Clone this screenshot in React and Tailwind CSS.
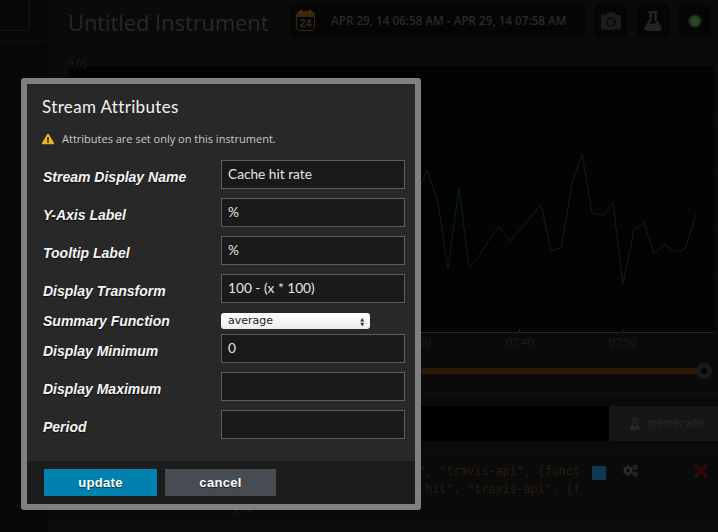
import React from "react";
import { FaCamera, FaFlask, FaExclamationTriangle, FaCogs, FaTimes } from "react-icons/fa";

const points =
  "421,185 427,170 438,203 448,269 459,188 469,267 479,256 489,240 499,227 510,241 520,230 530,218 541,204 551,251 561,248 572,183 582,154 592,213 603,215 613,203 623,284 634,230 644,223 654,254 665,244 675,252 685,249 696,214";

const fields = [
  { label: "Stream Display Name", value: "Cache hit rate" },
  { label: "Y-Axis Label", value: "%" },
  { label: "Tooltip Label", value: "%" },
  { label: "Display Transform", value: "100 - (x * 100)" },
  { label: "Summary Function", select: true },
  { label: "Display Minimum", value: "0" },
  { label: "Display Maximum", value: "" },
  { label: "Period", value: "" },
];

// Dimmed page that sits behind the modal
const Background = () => (
  <div className="flex h-full w-full bg-[#0a0a0a]">
    {/* Sidebar */}
    <div className="w-[48px] shrink-0 border-r border-[#050505] bg-[#080808]">
      <div className="h-[31px] w-[30px] border-r border-b border-[#131313]" />
      <div className="mt-[9px] border-t border-[#0e0e0e]" />
    </div>

    <div className="flex min-w-0 flex-1 flex-col">
      {/* Header */}
      <div className="flex h-[47px] shrink-0 items-start border-b border-[#0e0e0e] pt-[5px]">
        <div className="ml-[20px] w-[222px] text-[21.8px] leading-[36px] text-[#282828] font-['Open_Sans',sans-serif]">
          Untitled Instrument
        </div>
        <div className="flex h-[32px] w-[295px] items-center rounded-sm bg-[#050505]">
          <div className="relative ml-[6px] h-[20px] w-[19px] rounded-sm border border-[#3a2608]">
            <div className="h-[5px] bg-[#3a2608]" />
            <div className="absolute left-[3px] top-[-2px] h-[3px] w-[2px] bg-[#4a3210]" />
            <div className="absolute right-[3px] top-[-2px] h-[3px] w-[2px] bg-[#4a3210]" />
            <span className="absolute inset-x-0 top-[5px] text-center text-[11px] leading-[13px] font-bold text-[#2e2c28] font-['Liberation_Sans',sans-serif]">
              24
            </span>
          </div>
          <span className="ml-[16px] text-[11.7px] font-semibold text-[#2a2a2a] font-['Open_Sans',sans-serif]">
            APR 29, 14 06:58 AM - APR 29, 14 07:58 AM
          </span>
        </div>
        <div className="ml-[10px] flex h-[32px] w-[32px] items-center justify-center rounded-sm bg-[#050505] text-[#1c1c1c]">
          <FaCamera size={20} />
        </div>
        <div className="ml-[10px] flex h-[32px] w-[32px] items-center justify-center rounded-sm bg-[#050505] text-[#232323]">
          <FaFlask size={20} />
        </div>
        <div className="ml-[10px] flex h-[32px] w-[32px] items-center justify-center rounded-sm bg-[#050505]">
          <div className="h-[12px] w-[12px] rounded-full bg-[#2a4520] blur-[1px]" />
        </div>
      </div>

      {/* Chart */}
      <div className="ml-[20px] mr-[4px] mt-[19px] h-[266px] shrink-0 bg-[#030303]">
        <svg width="646" height="266" viewBox="68 66 646 266" className="block">
          {[120, 173, 226, 279].map((y) => (
            <line key={y} x1="68" x2="714" y1={y} y2={y} stroke="#080808" />
          ))}
          <polyline points={points} fill="none" stroke="#0c1f27" strokeWidth="1" />
        </svg>
      </div>
      <div className="relative mr-[4px] ml-[20px] h-[30px] shrink-0 border-t border-[#262626]">
        {[
          { label: "07:30", left: 335 },
          { label: "07:40", left: 438 },
          { label: "07:50", left: 541 },
        ].map((t) => (
          <span key={t.label} className="absolute top-px text-[11px] text-[#1c1c1c] font-['Open_Sans',sans-serif]" style={{ left: t.left }}>
            {t.label}
          </span>
        ))}
        <div className="absolute left-[451px] top-[-4px] h-[4px] w-px bg-[#262626]" />
        <div className="absolute left-[554px] top-[-4px] h-[4px] w-px bg-[#262626]" />
      </div>

      {/* Slider */}
      <div className="relative mr-[14px] ml-[20px] mt-[6px] h-[6px] shrink-0 bg-[#2a1a05]">
        <div className="absolute right-[-8px] top-[-5px] flex h-[16px] w-[16px] items-center justify-center rounded-full bg-[#1a1a1a]">
          <div className="h-[6px] w-[6px] rounded-full bg-[#050505]" />
        </div>
      </div>

      <div className="mt-[19px] shrink-0 border-t border-dotted border-[#161616]" />

      {/* Query row */}
      <div className="mt-[12px] flex h-[35px] shrink-0">
        <div className="flex-1 bg-black" />
        <div className="flex w-[109px] items-center bg-[#161616] pl-[20px] text-[#262626]">
          <FaFlask size={12} />
          <span className="ml-[7px] text-[13.6px] font-bold text-[#222222] font-['Liberation_Sans',sans-serif]">generate</span>
        </div>
      </div>

      <div className="mt-[10px] shrink-0 border-t border-[#101010]" />

      {/* Streams */}
      <div className="relative min-h-0 flex-1 overflow-hidden">
        <div className="pt-[10px] text-[11.7px] leading-[18px] whitespace-pre text-[#2a1c0c] font-['DejaVu_Sans_Mono',monospace]">
          <div className="ml-[370px]">{'", "travis-api", {funct'}</div>
          <div className="ml-[370px]">{'-hit", "travis-api", {f'}</div>
          <div className="ml-[184px]">{"});"}</div>
        </div>
        <div className="absolute left-[544px] top-[14px] h-[14px] w-[14px] bg-[#0d3a52]" />
        <div className="absolute left-[575px] top-[11px] text-[#2a2a2a]">
          <FaCogs size={15} />
        </div>
        <div className="absolute left-[643px] top-[9px] text-[#320909]">
          <FaTimes size={20} />
        </div>
        <div className="absolute inset-x-0 bottom-0 h-[9px] bg-[#0c0c0c]" />
      </div>
    </div>
  </div>
);

const Modal = () => (
  <div className="absolute left-[21px] top-[78px] w-[400px] rounded-[3px] border-[6px] border-[#808080] bg-[#282828]">
    <div className="px-[15px] pt-[12px]">
      <h2 className="text-[17px] leading-[22px] tracking-[0.35px] text-[#f2f2f2] font-['Lato',sans-serif]">Stream Attributes</h2>
      <div className="mt-[13px] flex items-center gap-[8px] text-[11px] leading-[16px] text-[#c8c8c8] font-['Open_Sans',sans-serif]">
        <FaExclamationTriangle size={12} className="text-[#e8b71c]" />
        Attributes are set only on this instrument.
      </div>
    </div>

    {/* Form */}
    <div className="ml-[16px] mt-[13px] flex flex-col">
      {fields.map((f) =>
        f.select ? (
          <div key={f.label} className="flex h-[22px] items-start">
            <label className="w-[178px] text-[14px] leading-[18px] font-bold italic text-[#f4f4f4] font-['Liberation_Sans',sans-serif] [text-shadow:0_1px_1px_rgba(0,0,0,0.7)]">
              {f.label}
            </label>
            <div className="mt-px flex h-[16px] w-[149px] items-center justify-between rounded-[3px] bg-gradient-to-b from-white to-[#ececec] pl-[7px] pr-[6px] pt-px text-[11px] text-[#222222] font-['DejaVu_Sans',sans-serif]">
              average
              <span className="text-[5px] leading-[5px] text-[#333333]">
                ▲
                <br />▼
              </span>
            </div>
          </div>
        ) : (
          <div key={f.label} className="mb-[9px] flex items-center">
            <label className="w-[178px] pt-[6px] text-[14px] font-bold italic text-[#f4f4f4] font-['Liberation_Sans',sans-serif] [text-shadow:0_1px_1px_rgba(0,0,0,0.7)]">
              {f.label}
            </label>
            <div className="flex h-[29px] w-[184px] items-center border border-[#5c5c5c] bg-[#1a1a1a] px-[6px] pb-px text-[13.7px] text-[#e4e4e4] font-['Lato',sans-serif]">
              {f.value}
            </div>
          </div>
        )
      )}
    </div>

    {/* Footer */}
    <div className="mt-[13px] flex h-[43px] gap-[8px] bg-[#1c1c1c] pl-[17px] pt-[8px]">
      <button className="h-[27px] w-[113px] bg-[#0081b0] text-[13px] font-bold tracking-[0.3px] text-white font-['Liberation_Sans',sans-serif] [text-shadow:0_1px_1px_rgba(0,0,0,0.6)]">
        update
      </button>
      <button className="h-[27px] w-[111px] bg-[#474c52] text-[13px] font-bold tracking-[0.3px] text-white font-['Liberation_Sans',sans-serif] [text-shadow:0_1px_1px_rgba(0,0,0,0.6)]">
        cancel
      </button>
    </div>
  </div>
);

export default function App() {
  return (
    <div className="relative h-[532px] w-[718px] overflow-hidden">
      <Background />
      <span className="absolute left-[68px] top-[57px] text-[10px] text-[#092230] font-['Open_Sans',sans-serif]">0.05</span>
      <Modal />
    </div>
  );
}
